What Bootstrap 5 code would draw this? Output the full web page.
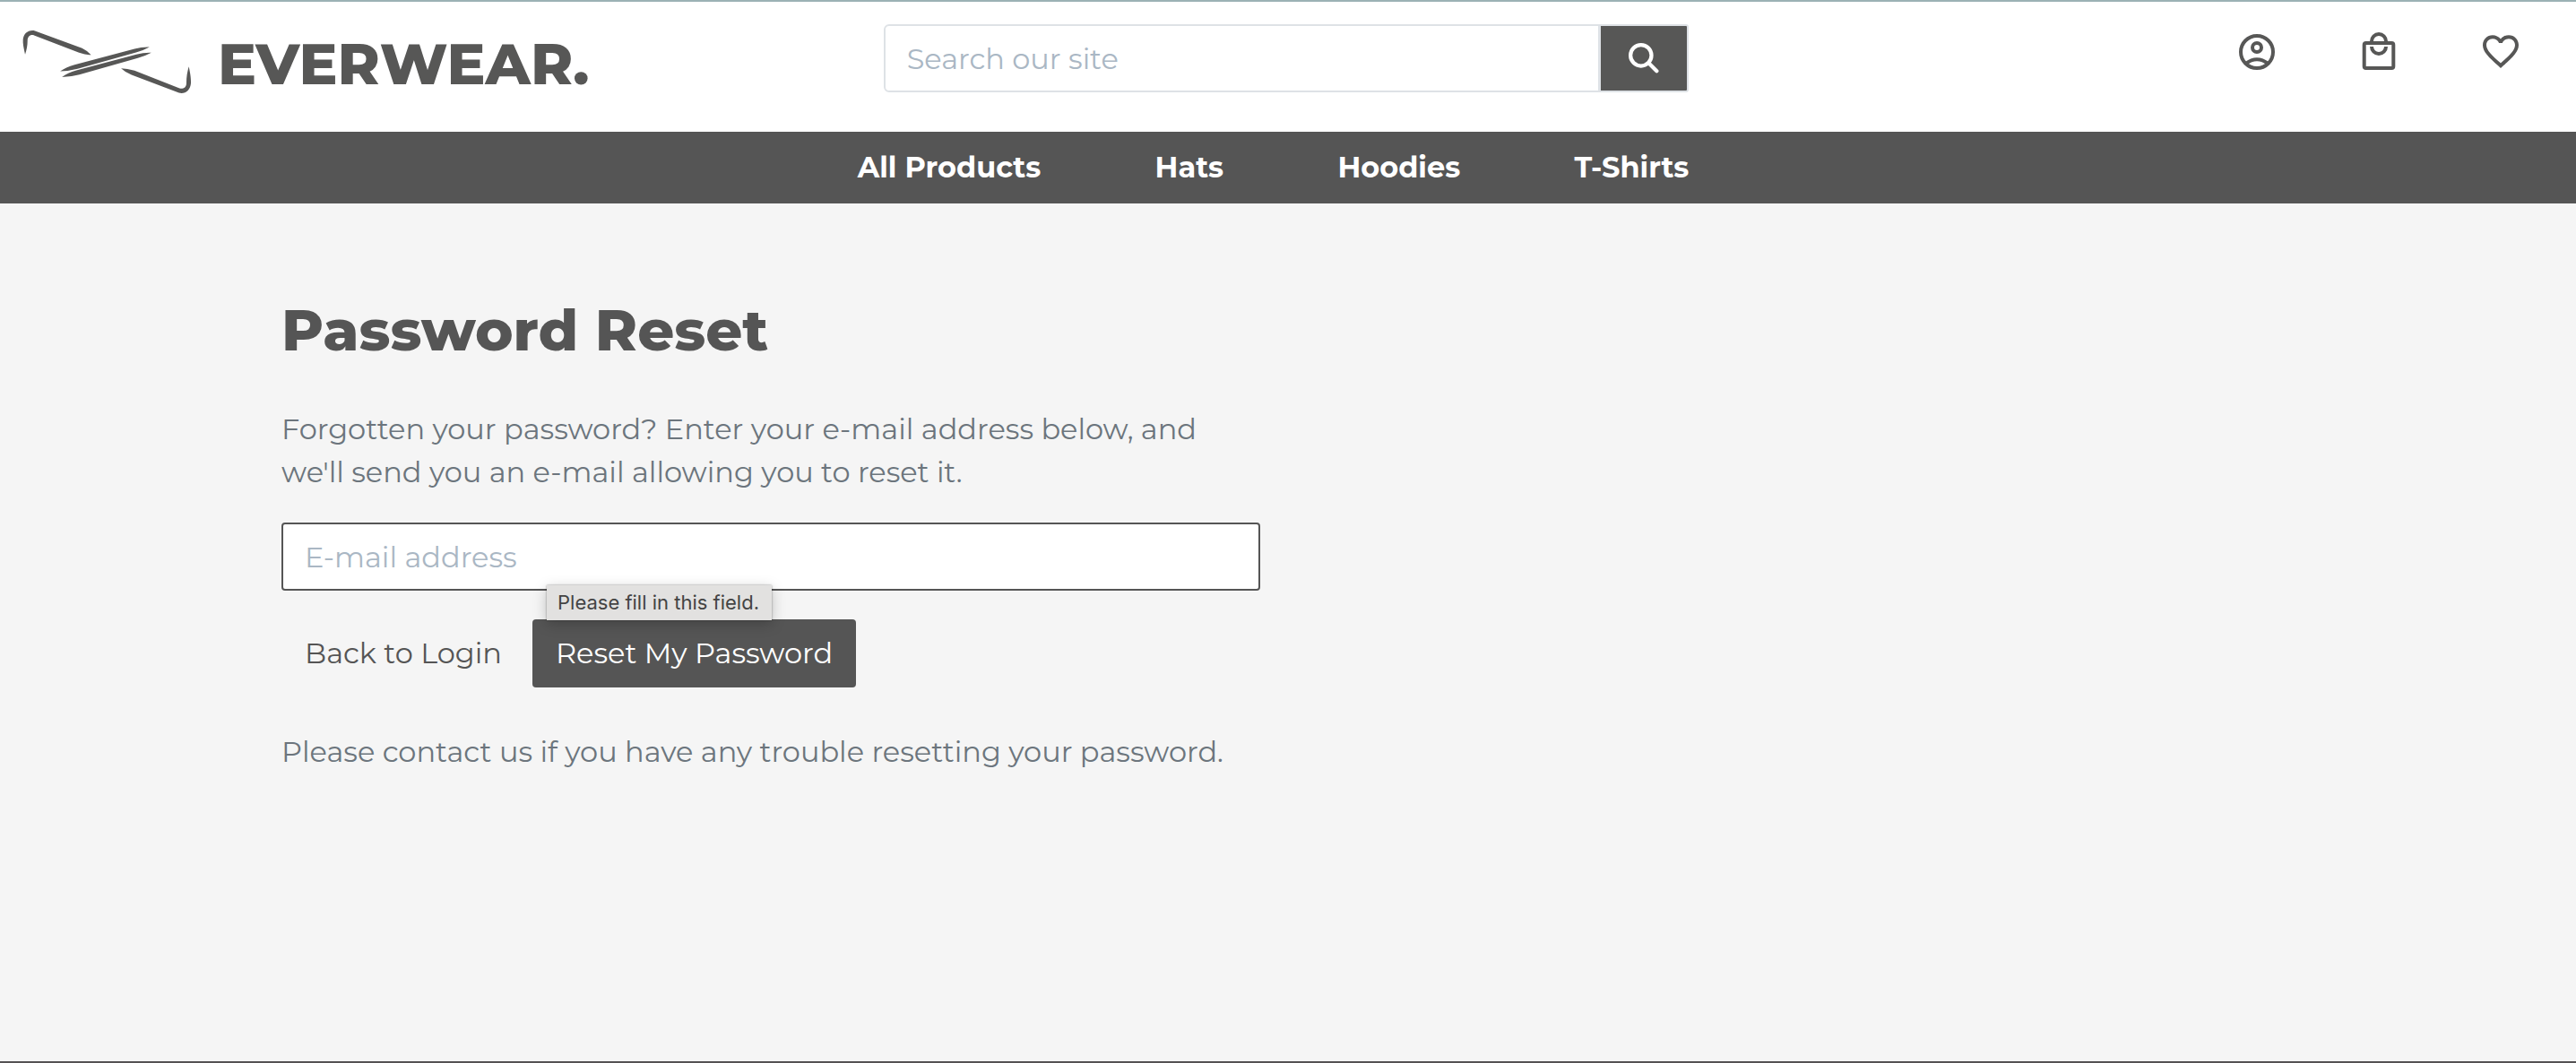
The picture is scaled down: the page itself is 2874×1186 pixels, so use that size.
<!DOCTYPE html>
<html lang="en">
<head>
<meta charset="utf-8">
<meta name="viewport" content="width=device-width, initial-scale=1">
<title>Password Reset | Everwear</title>
<link href="https://cdn.jsdelivr.net/npm/bootstrap@5.3.0/dist/css/bootstrap.min.css" rel="stylesheet">
<style>
  :root { font-size: 32px; --ink: #555; --line: #dee2e6; }
  body { font-family: Montserrat, Inter, "Liberation Sans", sans-serif; color: var(--ink); background: #f5f5f5; font-size: 32px; line-height: 48px; }
  .site-header { background: #fff; border-top: 2px solid #9bb2b5; min-height: 147px; padding-top: 25px; }
  .wide-row { --bs-gutter-x: 58px; padding-right: 4px; }
  .brand { color: #575756; font-size: 64px; line-height: 72px; font-weight: 800; gap: 26px; padding-top: 3px; margin-left: -6px; }
  .brand svg { width: 194px; height: 77px; }
  .form-control, .form-control:focus { height: 76px; padding: 12px 24px; border: 2px solid var(--line); border-radius: 6px; background: #fff; box-shadow: none; font-size: 32px; }
  .form-control::placeholder { color: #aab7c4; opacity: 1; }
  .search-btn { width: 100px; background: #575756; border: 2px solid var(--line); border-radius: 0 3px 3px 0; }
  .search-btn svg { width: 34px; height: 34px; }
  .icon-links { gap: 88px; padding: 7px 27px 0 0; }
  .icon-links a { color: #575756; }
  .icon-links svg { width: 48px; height: 48px; display: block; }
  .site-nav { background: var(--ink); height: 80px; }
  .site-nav a { color: #fff; font-weight: 700; text-decoration: none; }
  .page { width: 100%; max-width: 2246px; padding-top: 103px; }
  .page .row { --bs-gutter-x: 62px; margin: 0; }
  .page .col-6 { padding-left: 0; }
  h1 { font-size: 64px; line-height: 77px; font-weight: 800; margin-bottom: 48px; }
  .note { color: #6c757d; }
  .email-box, .email-box:focus { border-color: var(--ink); border-radius: 4px; }
  .btn { padding: 12px 24px; border: 2px solid transparent; border-radius: 4px; font-size: 32px; line-height: 48px; color: var(--ink); }
  .btn-ink, .btn-ink:hover { background: var(--ink); color: #fff; }
  .hint { left: 296px; top: 70px; padding: 4px 14px 4px 12px; background: #e2e1e0; color: #444; font: 22px/31px Inter, sans-serif; white-space: nowrap; box-shadow: 0 0 2px rgba(0,0,0,.4), 0 4px 16px rgba(0,0,0,.22); z-index: 5; }
  .site-footer { border-top: 2px solid #555254; }
</style>
</head>
<body class="d-flex flex-column min-vh-100">
<header class="site-header">
  <div class="container-fluid p-0">
    <div class="row wide-row mx-0 align-items-start">
      <div class="col-4">
        <a class="brand d-flex align-items-end text-decoration-none" href="#">
          <svg viewBox="70 60 580 230" fill="currentColor" aria-hidden="true">
            <path d="M85 152C80 130 77 115 78 102C80 82 96 68 118 73L275 131Q290 138 305 153Q290 155 265 146L115 88C102 84 93 93 93 106C93 122 90 136 85 152Z"/>
            <path d="M631 192C636 214 639 236 638 248C636 270 620 285 598 280L440 220Q420 212 405 198Q425 198 450 206L600 265C612 268 623 262 623 248C623 225 626 210 631 192Z"/>
            <path d="M202 208Q220 194 250 186L450 133Q475 126 500 127Q480 138 455 145L260 200Q230 208 202 208Z"/>
            <path d="M208 227Q226 213 256 205L456 152Q481 145 506 146Q486 157 461 164L266 219Q236 227 208 227Z"/>
          </svg>
          <span>EVERWEAR.</span>
        </a>
      </div>
      <div class="col-4">
        <form class="input-group flex-nowrap" role="search">
          <input class="form-control" type="search" placeholder="Search our site" aria-label="Search our site">
          <button class="search-btn d-flex align-items-center justify-content-center text-white" type="button" aria-label="Search">
            <svg viewBox="0 0 32 32" fill="none" stroke="currentColor" stroke-width="4" stroke-linecap="round" aria-hidden="true"><circle cx="13" cy="13" r="11"/><path d="M21 21l8.500 8.500"/></svg>
          </button>
        </form>
      </div>
      <div class="col-4">
        <div class="icon-links d-flex justify-content-end">
          <a href="#" aria-label="Account"><svg viewBox="0 0 48 48" fill="none" stroke="currentColor" stroke-width="4"><circle cx="24" cy="24" r="18"/><circle cx="24" cy="19" r="5"/><path d="M11.500 37Q24 27.500 36.500 37"/></svg></a>
          <a href="#" aria-label="Shopping bag"><svg viewBox="0 0 48 48" fill="none" stroke="currentColor" stroke-width="4"><rect x="7.700" y="14" width="32.600" height="28" rx="2"/><path d="M16 13v-1a8 8 0 0 1 16 0v1M16 18a8 8 0 0 0 16 0"/></svg></a>
          <a href="#" aria-label="Wishlist"><svg viewBox="0 0 24 24" fill="currentColor"><path d="M16.500 2.600c-1.740 0-3.410.81-4.500 2.090C10.910 3.410 9.240 2.600 7.500 2.600 4.420 2.600 2 5.020 2 8.100c0 3.780 3.400 6.860 8.550 11.540L12 20.950l1.450-1.320C18.600 14.960 22 11.880 22 8.100c0-3.080-2.420-5.500-5.500-5.500zm-4.400 15.550-.1.100-.1-.1C7.140 13.840 4 10.990 4 8.100c0-2 1.500-3.500 3.500-3.500 1.540 0 3.040.99 3.570 2.360h1.870C13.460 5.590 14.960 4.600 16.500 4.600c2 0 3.500 1.500 3.500 3.500 0 2.890-3.140 5.740-7.900 10.050z"/></svg></a>
        </div>
      </div>
    </div>
  </div>
</header>
<nav class="site-nav d-flex align-items-center" aria-label="Categories">
  <div class="container-fluid p-0">
    <div class="row wide-row mx-0">
      <div class="col-4 offset-4 ps-0 d-flex justify-content-between">
        <a href="#">All Products</a>
        <a href="#">Hats</a>
        <a href="#">Hoodies</a>
        <a href="#">T-Shirts</a>
      </div>
    </div>
  </div>
</nav>
<main class="page mx-auto flex-grow-1">
  <div class="row">
    <div class="col-6">
      <h1>Password Reset</h1>
      <p class="note mb-0">Forgotten your password? Enter your e-mail address below, and we'll send you an e-mail allowing you to reset it.</p>
      <form class="position-relative mt-3">
        <input class="form-control email-box" type="email" placeholder="E-mail address" aria-label="E-mail address" aria-describedby="email-hint" required>
        <div class="hint position-absolute" id="email-hint" role="tooltip">Please fill in this field.</div>
        <div class="d-flex gap-1 mt-3">
          <a class="btn" href="#">Back to Login</a>
          <button class="btn btn-ink" type="submit">Reset My Password</button>
        </div>
      </form>
      <p class="note mt-4 mb-0">Please contact us if you have any trouble resetting your password.</p>
    </div>
  </div>
</main>
<footer class="site-footer"></footer>
<script src="https://cdn.jsdelivr.net/npm/bootstrap@5.3.0/dist/js/bootstrap.bundle.min.js"></script>
</body>
</html>
